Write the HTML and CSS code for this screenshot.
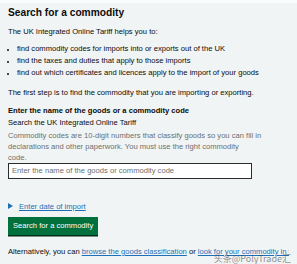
FILE: index.html
```html
<!DOCTYPE html>
<html lang="en">
<head>
<meta charset="utf-8">
<link rel="stylesheet" href="styles.css">
</head>
<body>
<div class="topbar"></div>
<main class="page">
  <h1 class="title">Search for a commodity</h1>
  <p class="text intro">The UK Integrated Online Tariff helps you to:</p>
  <ul class="list">
    <li>find commodity codes for imports into or exports out of the UK</li>
    <li>find the taxes and duties that apply to those imports</li>
    <li>find out which certificates and licences apply to the import of your goods</li>
  </ul>
  <p class="text step">The first step is to find the commodity that you are importing or exporting.</p>
  <div class="field">
    <label class="label">Enter the name of the goods or a commodity code</label>
    <div class="sub">Search the UK Integrated Online Tariff</div>
    <div class="hint">Commodity codes are 10-digit numbers that classify goods so you can fill in<br>declarations and other paperwork. You must use the right commodity<br>code.</div>
    <div class="input">Enter the name of the goods or commodity code</div>
  </div>
  <div class="details"><span class="arrow"></span><a class="link">Enter date of import</a></div>
  <div class="button">Search for a commodity</div>
  <p class="text alt">Alternatively, you can <a class="link">browse the goods classification</a> or <a class="link">look for your commodity in the A-Z</a>.</p>
  <div class="watermark">头条@PolyTrade汇</div>
</main>
</body>
</html>
```

FILE: styles.css
```css
html, body {
  margin: 0;
  padding: 0;
  background: #f1f4f4;
}
body {
  font-family: "Liberation Sans", Arial, sans-serif;
  color: #0b0c0c;
  width: 297px;
  height: 264px;
  overflow: hidden;
}
.topbar {
  height: 3px;
  background: #fafbfb;
}
.page {
  position: relative;
  padding: 0 8px;
}
.title {
  margin: 3px 0 0;
  font-size: 10.2px;
  line-height: 14px;
  font-weight: bold;
}
.text {
  margin: 0;
  font-size: 7.6px;
  line-height: 11px;
}
.intro {
  margin-top: 5.5px;
}
.list {
  margin: 6.5px 0 0;
  padding: 0 0 0 9px;
  font-size: 7.6px;
  line-height: 12px;
}
.list li::marker {
  font-size: 6px;
}
.step {
  margin-top: 7.5px;
}
.field {
  margin-top: 7px;
  font-size: 7.6px;
  line-height: 11px;
}
.label {
  display: block;
  font-weight: bold;
}
.sub {
  margin-top: 1px;
}
.hint {
  color: #6b7072;
  margin-top: 2px;
  white-space: nowrap;
}
.input {
  margin-top: 0.5px;
  width: 236px;
  height: 14px;
  border: 1.5px solid #2b2c2c;
  background: #fff;
  color: #6b7072;
  padding: 0 3px;
  line-height: 14px;
  font-size: 7.6px;
}
.details {
  margin-top: 21.5px;
  font-size: 7.6px;
  line-height: 11px;
  display: flex;
  align-items: center;
  gap: 6px;
}
.arrow {
  width: 0;
  height: 0;
  border-left: 5px solid #1d70b8;
  border-top: 3px solid transparent;
  border-bottom: 3px solid transparent;
}
.link {
  color: #1d70b8;
  text-decoration: underline;
}
.button {
  margin-top: 5.5px;
  display: inline-block;
  background: #00703c;
  color: #fff;
  font-size: 7.6px;
  line-height: 18px;
  padding: 0 5px;
  box-shadow: 0 1.5px 0 #002d18;
}
.alt {
  margin-top: 11px;
  white-space: nowrap;
  overflow: hidden;
}
.watermark {
  position: absolute;
  right: 6px;
  top: 246px;
  font-family: "Noto Sans CJK SC", sans-serif;
  font-size: 9px;
  line-height: 13px;
  color: rgba(70, 70, 70, 0.6);
}
```
